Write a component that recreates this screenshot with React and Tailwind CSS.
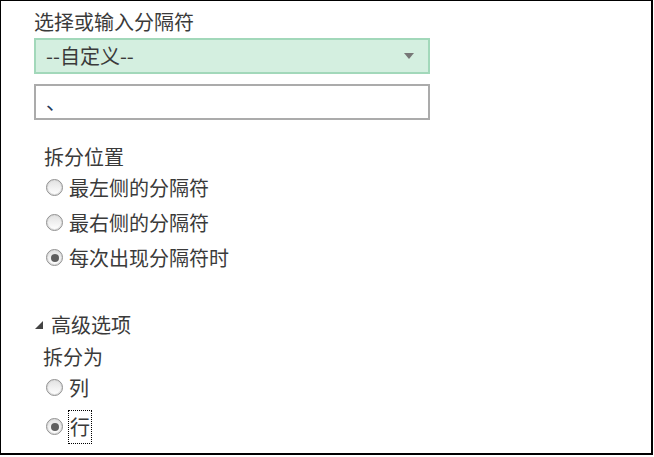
import React from 'react'

const font = { fontFamily: '"Noto Sans CJK SC", "Microsoft YaHei", sans-serif' }

const Radio = ({ label, checked, focused }) => (
    <div className="flex items-center h-[35px] pl-[45px]">
        <span className="shrink-0 w-[17px] h-[17px] rounded-full border border-[#8f8f8f] bg-gradient-to-b from-[#e2e2e2] to-white shadow-[inset_0_0_0_1px_#dddddd] flex items-center justify-center">
            {checked && <span className="w-[8px] h-[8px] rounded-full bg-[#5e5e5e]" />}
        </span>
        <span className={`ml-[6px] text-[20px] leading-[24px] text-[#3a3a3a] ${focused ? 'outline outline-1 outline-dotted outline-black px-[1px] py-[4px]' : ''}`}>
            {label}
        </span>
    </div>
)

const App = () => {
    return (
        <div className="w-[654px] h-[457px] bg-white" style={font}>
            <div className="w-[653px] h-[455px] border-t border-l border-r-2 border-b-2 border-black bg-white">
                <div className="pl-[33px] pt-[9px]">
                    <div className="h-[24px] leading-[24px] text-[20px] text-[#3a3a3a]">选择或输入分隔符</div>

                    <div className="mt-[4px] w-[396px] h-[36px] border-2 border-[#a2d8ba] bg-[#d4efe0] flex items-center justify-between pl-[10px] pr-[14px]">
                        <span className="text-[20px] leading-[24px] text-[#3a3a3a]">--自定义--</span>
                        <svg width="10" height="6" viewBox="0 0 10 6">
                            <polygon points="0,0 10,0 5,6" fill="#777777" />
                        </svg>
                    </div>

                    <div className="mt-[10px] w-[396px] h-[36px] border-2 border-[#ababab] bg-white flex items-center pl-[10px]">
                        <span className="text-[20px] leading-[24px] text-[#23395b]">、</span>
                    </div>

                    <div className="mt-[25px] pl-[10px] h-[24px] leading-[24px] text-[20px] text-[#3a3a3a]">拆分位置</div>
                </div>

                <div className="mt-[1px]">
                    <Radio label="最左侧的分隔符" />
                    <Radio label="最右侧的分隔符" />
                    <Radio label="每次出现分隔符时" checked />
                </div>

                <div className="mt-[38px] flex items-center h-[24px] pl-[34px]">
                    <svg width="8" height="8" viewBox="0 0 8 8">
                        <polygon points="8,0 8,8 0,8" fill="#444444" />
                    </svg>
                    <span className="ml-[8px] text-[20px] leading-[24px] text-[#3a3a3a]">高级选项</span>
                </div>

                <div className="mt-[8px] pl-[42px] h-[24px] leading-[24px] text-[20px] text-[#3a3a3a]">拆分为</div>

                <div className="mt-[1px]">
                    <Radio label="列" />
                    <div className="mt-[4px]">
                        <Radio label="行" checked focused />
                    </div>
                </div>
            </div>
        </div>
    )
}

export default App
